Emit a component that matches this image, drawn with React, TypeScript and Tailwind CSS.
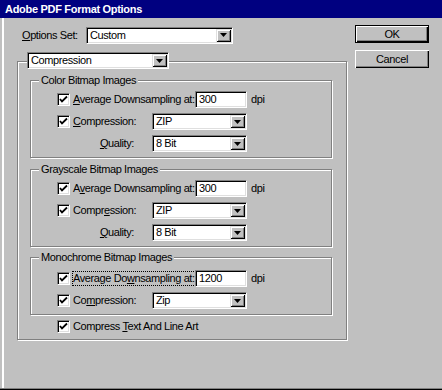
import React from "react";

const sunken =
  "border border-t-[#808080] border-l-[#808080] border-r-white border-b-white shadow-[inset_1px_1px_#000,inset_-1px_-1px_#dfdfdf]";
const etched = "border border-[#808080] shadow-[inset_1px_1px_#ffffff,1px_1px_#ffffff]";

function Arrow() {
  return (
    <div className="w-[15px] h-full bg-[#c0c0c0] flex items-center justify-center shadow-[inset_1px_1px_#dfdfdf,inset_-1px_-1px_#000,inset_2px_2px_#fff,inset_-2px_-2px_#808080]">
      <svg width="7" height="4" viewBox="0 0 7 4">
        <path d="M0 0H7L3.5 4Z" fill="#000" />
      </svg>
    </div>
  );
}

function Select({ value, w }: { value: string; w: string }) {
  return (
    <div className={`${w} h-[17px] bg-white ${sunken} flex items-stretch p-[1px]`}>
      <div className="flex-1 pl-[2px] leading-[13px] flex items-center whitespace-nowrap">{value}</div>
      <Arrow />
    </div>
  );
}

function Field({ value }: { value: string }) {
  return (
    <div className={`w-[52px] h-[17px] bg-white ${sunken} pl-[3px] flex items-center leading-[13px]`}>
      {value}
    </div>
  );
}

function Check() {
  return (
    <div className={`w-[13px] h-[13px] shrink-0 bg-white ${sunken} flex items-center justify-center`}>
      <svg width="9" height="9" viewBox="0 0 9 9">
        <path d="M1 4 L3 6.5 L8 1.5" stroke="#000" strokeWidth="1.8" fill="none" />
      </svg>
    </div>
  );
}

function Label({ children, focus }: { children: React.ReactNode; focus?: boolean }) {
  return (
    <span className={`ml-[3px] whitespace-nowrap leading-[13px] ${focus ? "outline-1 outline-dotted outline-black" : ""}`}>
      {children}
    </span>
  );
}

function GroupTitle({ children }: { children: React.ReactNode }) {
  return (
    <div className="-mt-[7px] ml-[8px] w-fit px-[2px] bg-[#c0c0c0] leading-[13px] whitespace-nowrap">
      {children}
    </div>
  );
}

function DownRow({ label, value, focus }: { label: React.ReactNode; value: string; focus?: boolean }) {
  return (
    <div className="flex items-center h-[17px] pl-[26px]">
      <div className="w-[138px] flex items-center">
        <Check />
        <Label focus={focus}>{label}</Label>
      </div>
      <Field value={value} />
      <span className="ml-[4px]">dpi</span>
    </div>
  );
}

function CompRow({ label, value }: { label: React.ReactNode; value: string }) {
  return (
    <div className="flex items-center h-[17px] pl-[26px]">
      <div className="w-[95px] flex items-center">
        <Check />
        <Label>{label}</Label>
      </div>
      <Select value={value} w="w-[95px]" />
    </div>
  );
}

function QualRow({ value }: { value: string }) {
  return (
    <div className="flex items-center h-[17px] pl-[26px]">
      <div className="w-[95px] text-right pr-[18px]">
        <span className="underline">Q</span>uality:
      </div>
      <Select value={value} w="w-[95px]" />
    </div>
  );
}

export default function App() {
  return (
    <div className="w-[442px] h-[390px] bg-[#c0c0c0] flex flex-col font-['Liberation_Sans',Arial,sans-serif] text-[11px] tracking-[-0.4px] text-black border-b border-black overflow-hidden">
      <div className="h-[18px] shrink-0 bg-[#000080] text-white font-bold text-[11px] pl-[5px] flex items-center tracking-[-0.3px]">
        Adobe PDF Format Options
      </div>
      <div className="flex-1 flex border-b border-[#808080] shadow-[inset_2px_0_#c0c0c0,inset_4px_0_#ffffff]">
        <div className="pl-[17px] pt-[8px] w-[346px] shrink-0">
          <div className="flex items-center h-[18px]">
            <div className="pl-[5px] w-[69px]">
              <span className="underline">O</span>ptions Set:
            </div>
            <Select value="Custom" w="w-[147px]" />
          </div>
          <div className={`mt-[17px] w-[330px] ${etched} pb-[4px]`}>
            <div className="-mt-[10px] ml-[9px] w-fit">
              <Select value="Compression" w="w-[142px]" />
            </div>
            <div className={`mt-[11px] ml-[12px] w-[302px] ${etched} pb-[5px]`}>
              <GroupTitle>Color Bitmap Images</GroupTitle>
              <div className="mt-[4px] flex flex-col gap-[5px]">
                <DownRow label={<><span className="underline">A</span>verage Downsampling at:</>} value="300" />
                <CompRow label={<><span className="underline">C</span>ompression:</>} value="ZIP" />
                <QualRow value="8 Bit" />
              </div>
            </div>
            <div className={`mt-[11px] ml-[12px] w-[302px] ${etched} pb-[5px]`}>
              <GroupTitle>Grayscale Bitmap Images</GroupTitle>
              <div className="mt-[4px] flex flex-col gap-[5px]">
                <DownRow label={<>A<span className="underline">v</span>erage Downsampling at:</>} value="300" />
                <CompRow label={<>Compr<span className="underline">e</span>ssion:</>} value="ZIP" />
                <QualRow value="8 Bit" />
              </div>
            </div>
            <div className={`mt-[10px] ml-[12px] w-[302px] ${etched} pb-[5px]`}>
              <GroupTitle>Monochrome Bitmap Images</GroupTitle>
              <div className="mt-[6px] flex flex-col gap-[5px]">
                <DownRow label={<>Average Do<span className="underline">w</span>nsampling at:</>} value="1200" focus />
                <CompRow label={<>Co<span className="underline">m</span>pression:</>} value="Zip" />
              </div>
            </div>
            <div className="mt-[3px] h-[17px] flex items-center pl-[39px]">
              <Check />
              <Label>
                Compress <span className="underline">T</span>ext And Line Art
              </Label>
            </div>
          </div>
        </div>
        <div className="ml-[9px] pt-[7px] flex flex-col gap-[7px]">
          <button className="w-[74px] h-[18px] bg-[#c0c0c0] border border-black shadow-[inset_1px_1px_#fff,inset_-1px_-1px_#000,inset_-2px_-2px_#808080] flex items-center justify-center leading-none">
            OK
          </button>
          <button className="w-[74px] h-[18px] bg-[#c0c0c0] shadow-[inset_1px_1px_#fff,inset_-1px_-1px_#000,inset_-2px_-2px_#808080] flex items-center justify-center leading-none">
            Cancel
          </button>
        </div>
      </div>
    </div>
  );
}
